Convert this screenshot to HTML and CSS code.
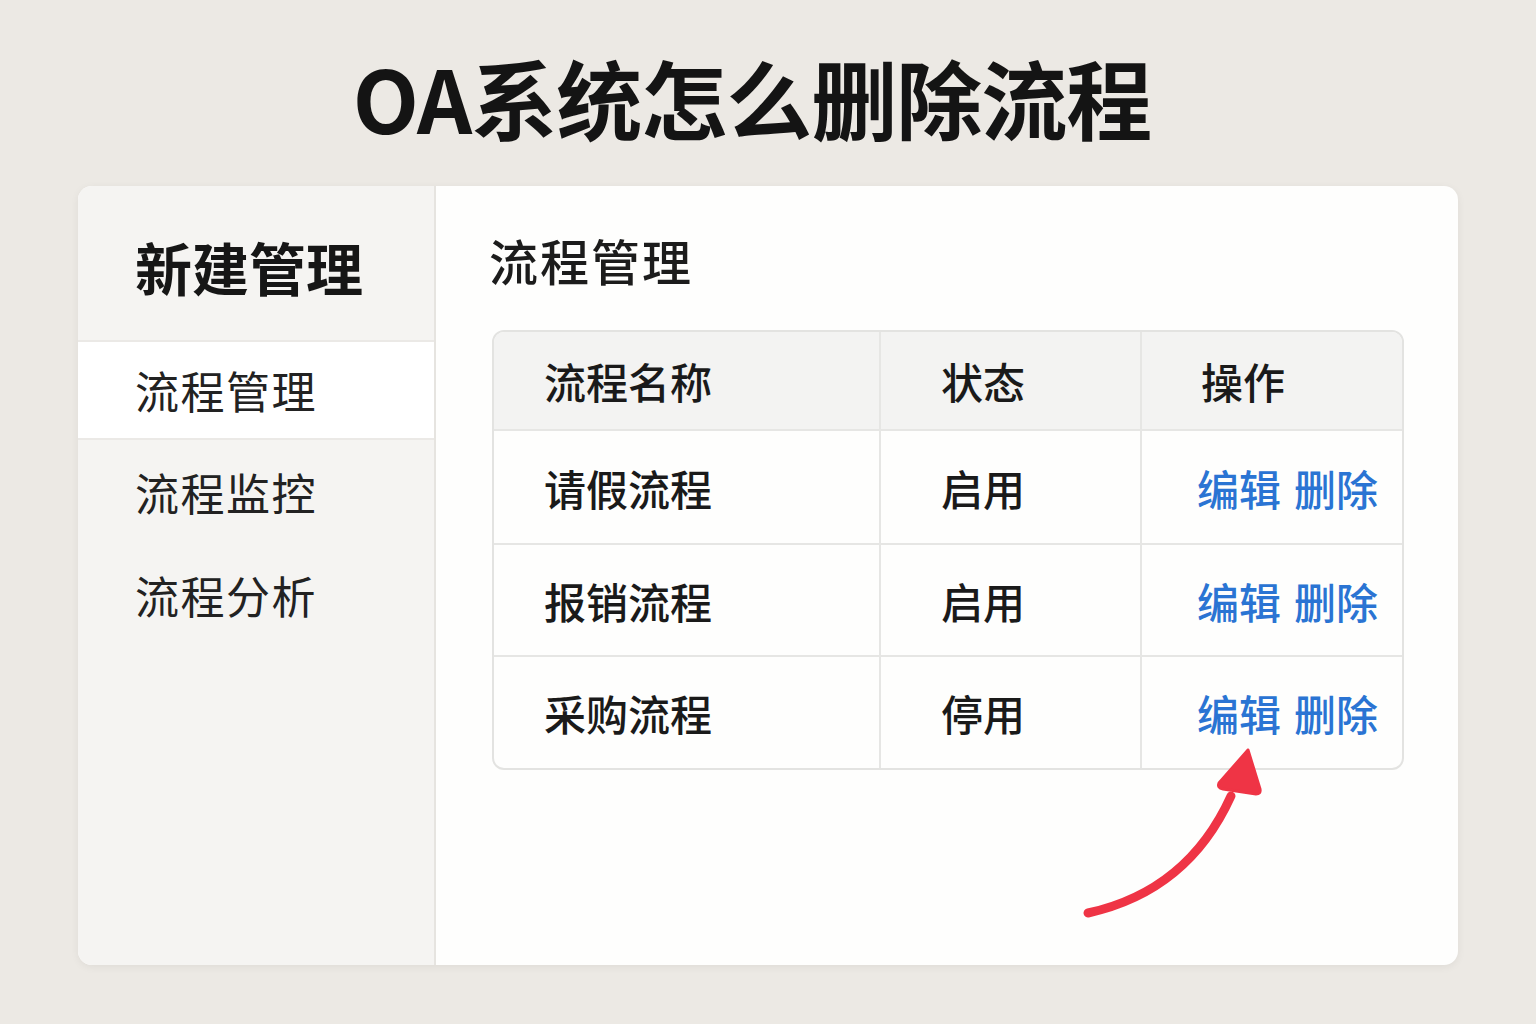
FILE: index.html
```html
<!DOCTYPE html>
<html lang="zh-CN">
<head>
<meta charset="utf-8">
<title>OA系统怎么删除流程</title>
<link rel="stylesheet" href="styles.css">
</head>
<body>
<h1 class="title">OA系统怎么删除流程</h1>
<div class="card">
  <aside class="sidebar">
    <div class="side-head">新建管理</div>
    <div class="side-item active">流程管理</div>
    <div class="side-item">流程监控</div>
    <div class="side-item">流程分析</div>
  </aside>
  <main class="main">
    <h2 class="main-title">流程管理</h2>
    <div class="table">
      <div class="cell head c1">流程名称</div>
      <div class="cell head c2">状态</div>
      <div class="cell head c3">操作</div>

      <div class="cell c1">请假流程</div>
      <div class="cell c2">启用</div>
      <div class="cell c3 links"><span class="link">编辑</span><span class="link">删除</span></div>

      <div class="cell c1">报销流程</div>
      <div class="cell c2">启用</div>
      <div class="cell c3 links"><span class="link">编辑</span><span class="link">删除</span></div>

      <div class="cell c1 last">采购流程</div>
      <div class="cell c2 last">停用</div>
      <div class="cell c3 links last"><span class="link">编辑</span><span class="link">删除</span></div>
    </div>
    <svg class="arrow" width="220" height="200" viewBox="0 0 220 200">
      <path d="M12 177 Q112 155 155 60" fill="none" stroke="#ef3445" stroke-width="9" stroke-linecap="round"/>
      <path d="M172 14 L143 47 Q141 52 147 53 L180 58 Q185 58 184 53 Z" fill="#ef3445" stroke="#ef3445" stroke-width="3" stroke-linejoin="round"/>
    </svg>
  </main>
</div>
</body>
</html>
```

FILE: styles.css
```css
* { box-sizing: border-box; }
html, body { margin: 0; padding: 0; }
body {
  width: 1536px;
  height: 1024px;
  background: #ece9e4;
  font-family: "Noto Sans CJK SC", "Noto Sans", sans-serif;
  color: #1a1a1a;
  overflow: hidden;
}
.title {
  margin: 0;
  padding-top: 54px;
  padding-right: 32px;
  height: 186px;
  font-size: 86px;
  line-height: 86px;
  font-weight: 700;
  text-align: center;
  letter-spacing: -1px;
  color: #141414;
}
.card {
  margin: 0 78px;
  height: 779px;
  background: #fefefd;
  border-radius: 14px;
  box-shadow: 0 2px 8px rgba(0,0,0,0.06);
  display: flex;
  overflow: hidden;
}
.sidebar {
  width: 358px;
  background: #f5f4f2;
  border-right: 2px solid #e6e4e0;
  display: flex;
  flex-direction: column;
}
.side-head {
  height: 154px;
  padding-left: 57px;
  display: flex;
  align-items: center;
  font-size: 57px;
  font-weight: 700;
  padding-top: 6px;
  color: #161616;
}
.side-item {
  height: 103px;
  padding-left: 57px;
  display: flex;
  align-items: center;
  font-size: 44px;
  letter-spacing: 1.5px;
  color: #222;
}
.side-item.active {
  background: #ffffff;
  height: 100px;
  border-top: 2px solid #ebe9e6;
  border-bottom: 2px solid #ebe9e6;
}
.main {
  flex: 1;
  padding: 48px 0 0 56px;
  position: relative;
}
.main-title {
  margin: 0 0 44px -3px;
  font-size: 49px;
  line-height: 52px;
  font-weight: 500;
  letter-spacing: 2px;
  color: #1c1c1c;
}
.table {
  width: 912px;
  border: 2px solid #e3e3e1;
  border-radius: 12px;
  overflow: hidden;
  display: grid;
  grid-template-columns: 387px 261px 1fr;
  grid-template-rows: 99px 114px 112px 111px;
}
.cell {
  display: flex;
  align-items: center;
  font-size: 42px;
  font-weight: 500;
  color: #1a1a1a;
  border-bottom: 2px solid #e6e6e4;
  border-right: 2px solid #e6e6e4;
}
.cell.head { background: #f3f3f2; }
.cell.c1 { padding-left: 50px; }
.cell.c2 { padding-left: 60px; }
.cell.c3 { padding-left: 59px; border-right: none; }
.cell.last { border-bottom: none; }
.cell.links {
  padding-left: 55px;
  color: #2a74d3;
  gap: 13px;
}
.arrow {
  position: absolute;
  left: 640px;
  top: 550px;
}
```
